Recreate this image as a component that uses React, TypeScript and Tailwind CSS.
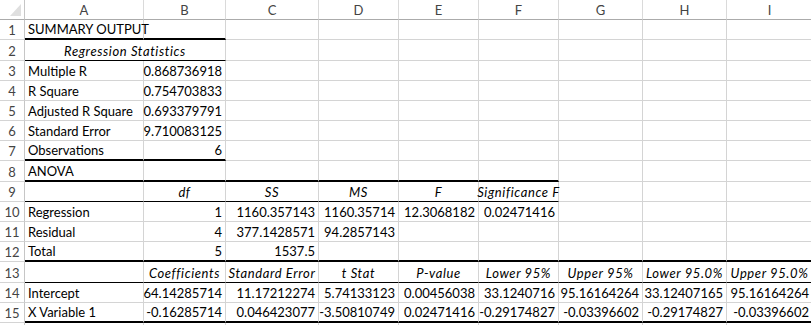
import React from "react";

type Align = "l" | "r" | "c";
interface Cell {
  v?: string;
  a?: Align;
  i?: boolean;
  span?: number;
}

const COLS = ["A", "B", "C", "D", "E", "F", "G", "H", "I"];
const COL_W = ["w-[119px]", "w-[82px]", "w-[93px]", "w-[80px]", "w-[80px]", "w-[80px]", "w-[84px]", "w-[84px]", "w-[86px]"];

const t = (v: string): Cell => ({ v, a: "l" });
const n = (v: string): Cell => ({ v, a: "r" });
const h = (v: string): Cell => ({ v, a: "c", i: true });
const e: Cell = {};

const ROWS: Cell[][] = [
  [t("SUMMARY OUTPUT")],
  [{ v: "Regression Statistics", a: "c", i: true, span: 2 }],
  [t("Multiple R"), n("0.868736918")],
  [t("R Square"), n("0.754703833")],
  [t("Adjusted R Square"), n("0.693379791")],
  [t("Standard Error"), n("9.710083125")],
  [t("Observations"), n("6")],
  [t("ANOVA")],
  [e, h("df"), h("SS"), h("MS"), h("F"), h("Significance F")],
  [t("Regression"), n("1"), n("1160.357143"), n("1160.35714"), n("12.3068182"), n("0.02471416")],
  [t("Residual"), n("4"), n("377.1428571"), n("94.2857143")],
  [t("Total"), n("5"), n("1537.5")],
  [e, h("Coefficients"), h("Standard Error"), h("t Stat"), h("P-value"), h("Lower 95%"), h("Upper 95%"), h("Lower 95.0%"), h("Upper 95.0%")],
  [t("Intercept"), n("64.14285714"), n("11.17212274"), n("5.74133123"), n("0.00456038"), n("33.1240716"), n("95.16164264"), n("33.12407165"), n("95.16164264")],
  [t("X Variable 1"), n("-0.16285714"), n("0.046423077"), n("-3.50810749"), n("0.02471416"), n("-0.29174827"), n("-0.03396602"), n("-0.29174827"), n("-0.03396602")],
];

// bottom borders drawn by the regression tool: row -> [lastCol, kind]
const BORDERS: Record<number, [number, "thick" | "thin"]> = {
  1: [1, "thick"],
  2: [1, "thin"],
  7: [1, "thick"],
  8: [5, "thick"],
  9: [5, "thin"],
  12: [8, "thick"],
  13: [8, "thin"],
  15: [8, "thick"],
};

const TALL = [2, 8, 13];

function bottomClass(row: number, col: number) {
  const b = BORDERS[row];
  if (!b || col > b[0]) return "border-b border-b-[#d4d4d4]";
  return b[1] === "thick" ? "border-b-2 border-b-black" : "border-b border-b-black";
}

function SheetRow({ num, cells }: { num: number; cells: Cell[] }) {
  const height = TALL.includes(num) ? "h-[21px]" : "h-[20px]";
  const out: React.ReactNode[] = [];
  let col = 0;
  while (col < COLS.length) {
    const c = cells[col] ?? e;
    const span = c.span ?? 1;
    const width = span === 2 ? "w-[201px]" : COL_W[col];
    const align =
      c.a === "r" ? "justify-end pr-[3px]" : c.a === "c" ? "justify-center" : "justify-start pl-[3px]";
    out.push(
      <div
        key={col}
        className={`${width} ${height} shrink-0 flex items-end pb-[1px] border-r border-r-[#d4d4d4] ${bottomClass(num, col + span - 1)} ${align}`}
      >
        <span className={`whitespace-nowrap leading-[16px] ${c.i ? "italic tracking-[0.6px]" : ""}`}>{c.v}</span>
      </div>
    );
    col += span;
  }
  return (
    <div className="flex">
      <div className={`w-[25px] ${height} shrink-0 flex items-end justify-center pb-[1px] border-r border-r-[#c6c6c6] border-b border-b-[#d4d4d4] text-[#444]`}>
        <span className="leading-[16px]">{num}</span>
      </div>
      {out}
    </div>
  );
}

export default function App() {
  return (
    <div
      className="w-[811px] h-[325px] overflow-hidden bg-white text-black text-[13px]"
      style={{ fontFamily: "Lato, 'Noto Sans', sans-serif" }}
    >
      <div className="flex">
        <div className="w-[25px] h-[20px] shrink-0 border-r border-r-[#c6c6c6] border-b border-b-[#ababab] relative">
          <svg className="absolute right-[3px] bottom-[3px]" width="11" height="12" viewBox="0 0 11 12">
            <polygon points="11,0 11,12 0,12" fill="#dfdfdf" />
          </svg>
        </div>
        {COLS.map((c, i) => (
          <div
            key={c}
            className={`${COL_W[i]} h-[20px] shrink-0 flex items-end justify-center pb-[1px] border-r border-r-[#dadada] border-b border-b-[#ababab] text-[#444]`}
          >
            <span className="leading-[16px]">{c}</span>
          </div>
        ))}
      </div>
      {ROWS.map((cells, i) => (
        <SheetRow key={i} num={i + 1} cells={cells} />
      ))}
      <div className="flex">
        <div className="w-[25px] h-[20px] shrink-0 border-r border-r-[#c6c6c6]" />
        {COLS.map((c, i) => (
          <div key={c} className={`${COL_W[i]} h-[20px] shrink-0 border-r border-r-[#d4d4d4]`} />
        ))}
      </div>
    </div>
  );
}
